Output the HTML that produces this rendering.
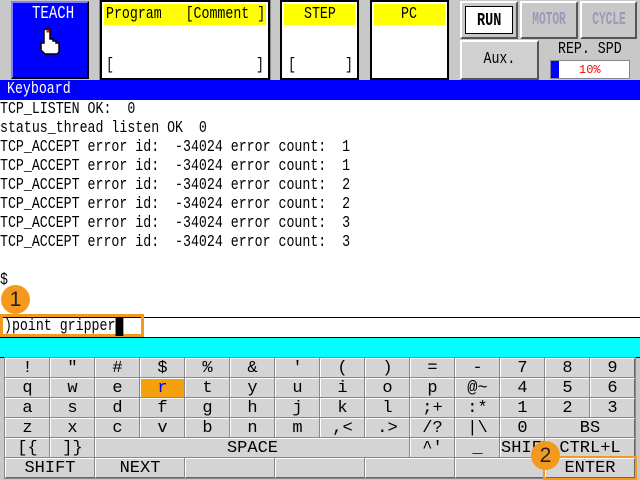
<!DOCTYPE html>
<html><head><meta charset="utf-8"><style>
*{margin:0;padding:0;box-sizing:border-box}
body{width:640px;height:480px;overflow:hidden;background:#c8c8c8;position:relative;font-family:"Liberation Mono",monospace}
.a{position:absolute}
.bev{border:2px solid;border-color:#fff #555 #555 #fff}
.t{position:absolute;white-space:pre;transform-origin:left top;transform:scaleX(.78);font-size:17px;line-height:19px}
.hdr{background:#ffff00;position:absolute;font-size:15px;line-height:21px;white-space:pre;color:#000}
#kb{position:absolute;left:5px;top:358px;display:grid;grid-template-columns:repeat(14,45px);grid-template-rows:repeat(6,20px)}
#kb div{background:#d4d4d4;border:1px solid;border-color:#fff #666 #666 #fff;outline:1px solid #888;text-align:center;font-size:17px;line-height:19px;overflow:hidden;white-space:pre}
.c{position:absolute;width:29px;height:29px;border-radius:50%;background:#f39a1e;color:#222;font-family:"Liberation Sans",sans-serif;font-size:21px;text-align:center;line-height:29px}
</style></head><body>
<div class="a bev" style="left:11px;top:1px;width:78px;height:78px;background:#0000ff;border-color:#8080ff #000 #000 #8080ff">
<div class="t" style="color:#fff;left:19px;top:2px;font-size:18px">TEACH</div>
<svg class="a" style="left:24px;top:24px" width="26" height="28" viewBox="0 0 26 28"><path d="M9 2h4v10h3v2h3v2h3v9l-2 2H8l-4-4v-7h3V3z" fill="#fff" stroke="#000" stroke-width="1.5"/><rect x="9.5" y="2.5" width="3" height="3" fill="red"/></svg>
</div>
<div class="a" style="left:100px;top:0;width:170px;height:80px;background:#fff;border:2px solid #000;outline:1px solid #888"></div>
<div class="hdr" style="left:104px;top:4px;width:162px;height:21px;overflow:hidden"><span class="t" style="left:2px;top:1px">Program   [Comment ]</span></div>
<div class="t" style="left:106px;top:56px">[</div><div class="t" style="left:256px;top:56px">]</div>
<div class="a" style="left:280px;top:0;width:79px;height:80px;background:#fff;border:2px solid #000"></div>
<div class="hdr" style="left:284px;top:4px;width:71px;height:21px"><span class="t" style="left:20px;top:1px">STEP</span></div>
<div class="t" style="left:288px;top:56px">[</div><div class="t" style="left:345px;top:56px">]</div>
<div class="a" style="left:370px;top:0;width:79px;height:80px;background:#fff;border:2px solid #000"></div>
<div class="hdr" style="left:374px;top:4px;width:71px;height:21px"><span class="t" style="left:27px;top:1px">PC</span></div>
<div class="a bev" style="left:460px;top:1px;width:58px;height:38px;background:#c8c8c8"><div class="a" style="left:3px;top:3px;width:48px;height:28px;background:#fff;border:1px solid #000;text-align:center;font:bold 18px/28px 'Liberation Mono';"><span style="display:inline-block;transform:scaleX(.75)">RUN</span></div></div>
<div class="a bev" style="left:520px;top:1px;width:58px;height:38px;background:#c8c8c8;text-align:center;font:bold 18px/34px 'Liberation Mono';color:#9a9ab8"><span style="display:inline-block;transform:scaleX(.62)">MOTOR</span></div>
<div class="a bev" style="left:580px;top:1px;width:57px;height:38px;background:#c8c8c8;text-align:center;font:bold 18px/34px 'Liberation Mono';color:#9a9ab8"><span style="display:inline-block;transform:scaleX(.62)">CYCLE</span></div>
<div class="a bev" style="left:460px;top:40px;width:79px;height:40px;background:#d0d0d0;text-align:center;font-size:17px;line-height:36px"><span style="display:inline-block;transform:scaleX(.78)">Aux.</span></div>
<div class="t" style="left:558px;top:40px">REP. SPD</div>
<div class="a" style="left:550px;top:60px;width:80px;height:19px;background:#fff;border:1px solid #888"><div class="a" style="left:0;top:0;width:8px;height:17px;background:#0000ff"></div><div class="a" style="left:28px;top:1px;color:red;font-size:12px;line-height:16px">10%</div></div>
<div class="a" style="left:0;top:80px;width:640px;height:20px;background:#0000ff"></div>
<div class="t" style="left:7px;top:80px;color:#fff">Keyboard</div>
<div class="a" style="left:0;top:100px;width:640px;height:218px;background:#fff"></div>
<div class="t" style="left:0;top:100px">TCP_LISTEN OK:  0
status_thread listen OK  0
TCP_ACCEPT error id:  -34024 error count:  1
TCP_ACCEPT error id:  -34024 error count:  1
TCP_ACCEPT error id:  -34024 error count:  2
TCP_ACCEPT error id:  -34024 error count:  2
TCP_ACCEPT error id:  -34024 error count:  3
TCP_ACCEPT error id:  -34024 error count:  3</div>
<div class="t" style="left:0;top:271px">$</div>
<div class="a" style="left:0;top:317px;width:640px;height:20px;background:#fff;border-top:1px solid #000"></div>
<div class="a" style="left:0;top:314px;width:144px;height:23px;border:3px solid #f39a1e"></div>
<div class="t" style="left:4px;top:317px">)point gripper<span style="background:#000">&#160;</span></div>
<div class="c" style="left:1px;top:285px">1</div>
<div class="a" style="left:0;top:337px;width:640px;height:21px;background:#00ffff;border-top:1px solid #000;border-bottom:1px solid #000"></div>
<div class="a" style="left:0;top:358px;width:640px;height:122px;background:#c8c8c8"></div>
<div id="kb">
<div>!</div><div>"</div><div>#</div><div>$</div><div>%</div><div>&amp;</div><div>'</div><div>(</div><div>)</div><div>=</div><div>-</div><div>7</div><div>8</div><div>9</div>
<div>q</div><div>w</div><div>e</div><div style="background:#f5a00e;color:#00f">r</div><div>t</div><div>y</div><div>u</div><div>i</div><div>o</div><div>p</div><div>@~</div><div>4</div><div>5</div><div>6</div>
<div>a</div><div>s</div><div>d</div><div>f</div><div>g</div><div>h</div><div>j</div><div>k</div><div>l</div><div>;+</div><div>:*</div><div>1</div><div>2</div><div>3</div>
<div>z</div><div>x</div><div>c</div><div>v</div><div>b</div><div>n</div><div>m</div><div>,&lt;</div><div>.&gt;</div><div>/?</div><div>|\</div><div>0</div><div style="grid-column:span 2">BS</div>
<div>[{</div><div>]}</div><div style="grid-column:span 7">SPACE</div><div>^'</div><div>_</div><div>SHIFT</div><div style="grid-column:span 2">CTRL+L</div>
<div style="grid-column:span 2">SHIFT</div><div style="grid-column:span 2">NEXT</div><div style="grid-column:span 2"></div><div style="grid-column:span 2"></div><div style="grid-column:span 2"></div><div style="grid-column:span 2"></div><div style="grid-column:span 2;outline:2px solid #f39a1e">ENTER</div>
</div>
<div class="c" style="left:531px;top:441px">2</div>
</body></html>
